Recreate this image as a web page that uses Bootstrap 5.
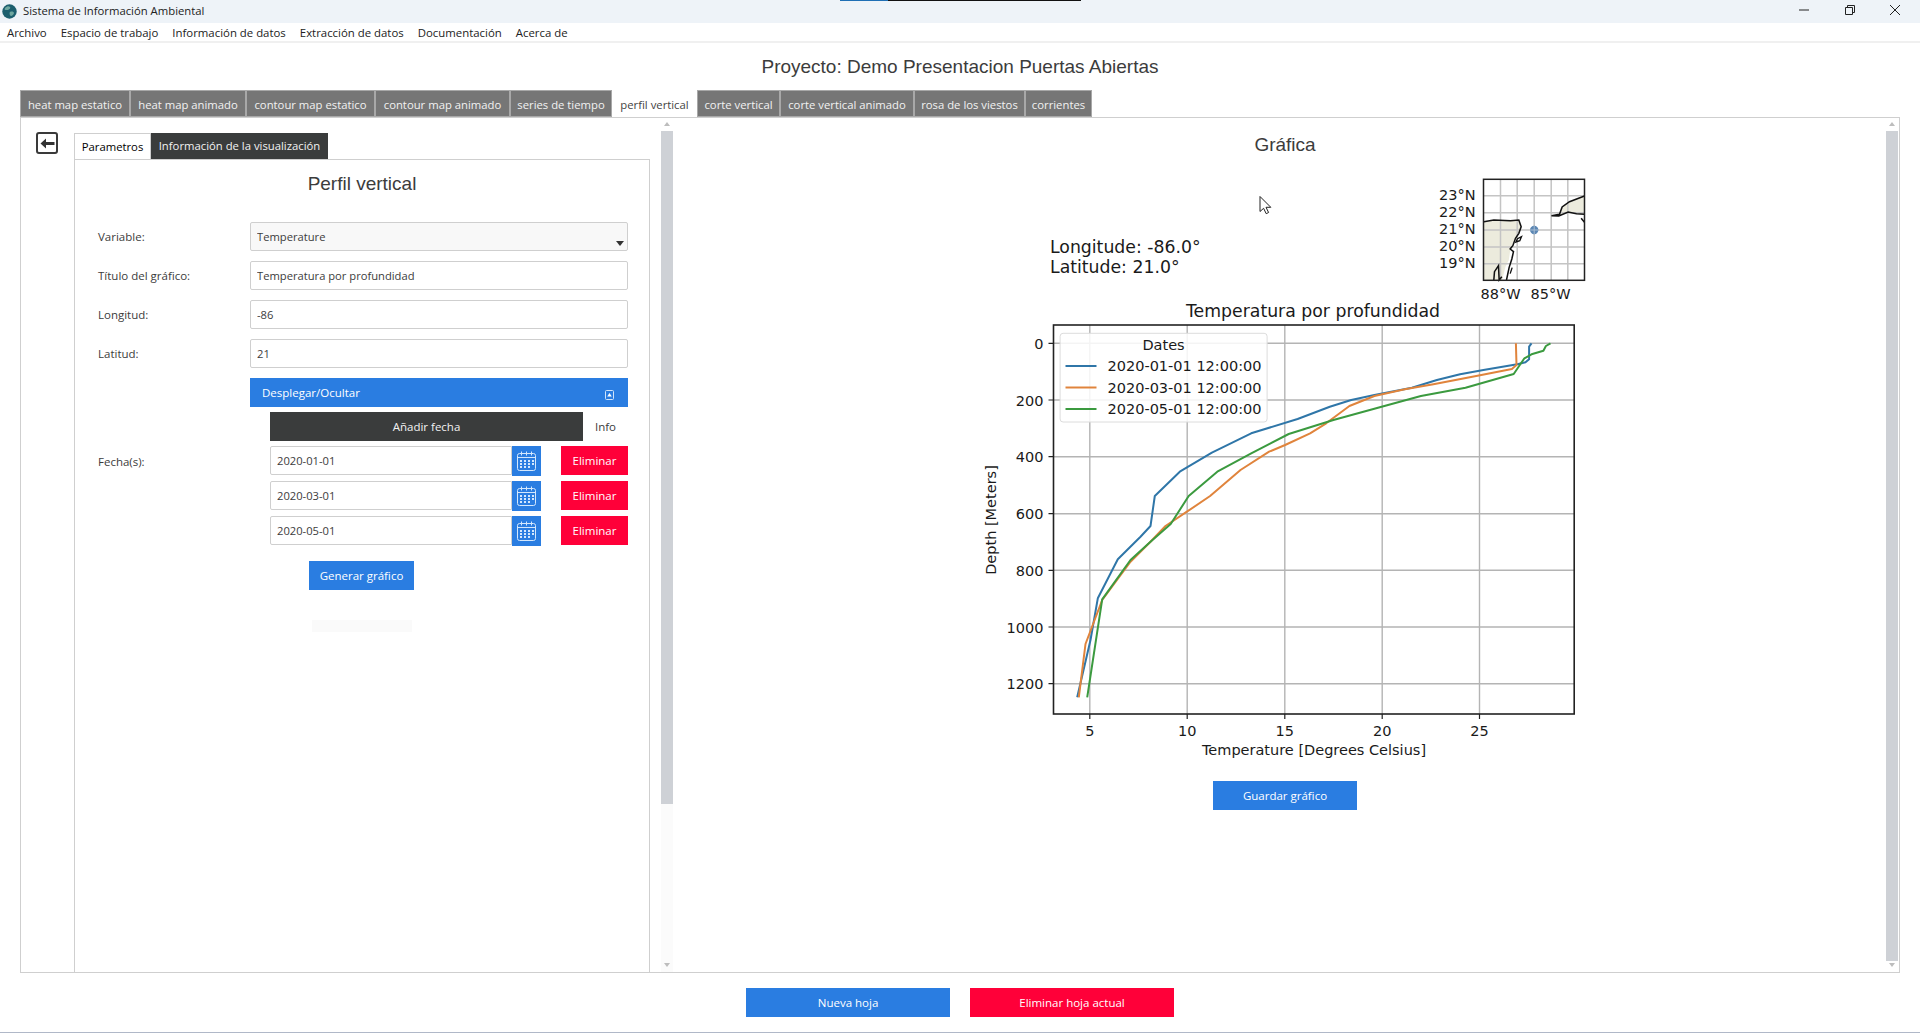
<!DOCTYPE html>
<html lang="es">
<head>
<meta charset="utf-8">
<title>Sistema de Información Ambiental</title>
<link href="https://cdn.jsdelivr.net/npm/bootstrap@5.3.0/dist/css/bootstrap.min.css" rel="stylesheet">
<style>
html,body{height:1033px;overflow:hidden;background:#fff}
body{font-family:"Open Sans","Liberation Sans",sans-serif;font-size:11.5px;color:#3c3c3c;width:1920px}
.app-shell{height:1033px;border-bottom:1px solid #b0b8c8}
.win-title{height:23px;background:#eef3f8;font-size:11.3px;color:#222;position:relative}
.win-title .app-logo{margin:0 6px 0 2px}
.win-progress{position:absolute;left:840px;top:0;width:241px;height:1px;background:linear-gradient(90deg,#1f6fb5 48px,#111 48px)}
.win-ctrls{margin-left:auto;gap:33.5px;padding-right:19px;margin-bottom:4px}
.menu-strip{height:20px;border-bottom:2px solid #f0f0f0;padding-left:7px;gap:14px;font-size:11.4px;color:#222;line-height:19px}
.proj-head{height:47px;font-family:"Liberation Sans",sans-serif;font-size:19px;color:#3c3c3c;line-height:47px;text-align:center;margin:0;padding:0;font-weight:400}
.top-tabs{margin-left:20px;height:27px;border:0;flex-wrap:nowrap}
.top-tabs .nav-link{height:27px;padding:0;border:1px solid #a8a8a8;border-radius:0;margin:0;background:#767676;color:#f2f2f2;font-size:11.3px;line-height:27px;text-align:center;white-space:nowrap}
.top-tabs .nav-link.active{background:#fff;color:#444;border-color:#fff}
.t1{width:110px}.t2{width:116px}.t3{width:129px}.t4{width:135px}.t5{width:102px}.t6{width:85px}.t7{width:83px}.t8{width:134px}.t9{width:111px}.t10{width:67px}
.work-frame{margin-left:20px;width:1880px;height:856px;border:1px solid #cfcfcf}
.left-pane{width:652px;flex:none}
.back-col{width:53px;flex:none;padding:14px 0 0 15px}
.back-btn{width:22px;height:22px;border:2px solid #3a3a3a;border-radius:3px;padding:0;background:#fff;display:flex;align-items:center;justify-content:center}
.param-col{width:576px;flex:none;padding-top:15px;display:flex;flex-direction:column}
.inner-tabs{height:26px;border:0;flex-wrap:nowrap}
.inner-tabs .nav-link{height:26px;padding:0;border:0;border-radius:0;margin:0;font-size:11.3px;line-height:26px;text-align:center;color:#444;background:#fff}
.inner-tabs .nav-link.dark-tab{background:#3a3c3c;color:#f2f2f2;width:177px}
.inner-tabs .nav-link.active{width:77px;border:1px solid #cfcfcf;border-bottom:0}
.inner-frame{flex:1;border:1px solid #cfcfcf;border-bottom:0;padding:0 21px 0 23px}
.pane-head{font-family:"Liberation Sans",sans-serif;font-size:19px;font-weight:400;color:#3c3c3c;text-align:center;line-height:24px;margin:0;padding-top:12px;height:62px;width:528px}
.form-line{height:29px;margin-bottom:10px}
.form-lab{width:152px;flex:none;margin:0;font-size:11.5px;color:#3c3c3c}
.fld{height:29px;min-height:29px;padding:0 6px;font-size:11.2px;border-radius:2px;border:1px solid #cfcfcf;color:#3c3c3c;line-height:27px;width:378px;background:#fff}
.sel-wrap{position:relative;width:378px}
.sel-wrap::after{content:"";position:absolute;right:4px;top:19px;border:4px solid transparent;border-top:5px solid #333;border-bottom:0}
.sel-wrap .fld{background:#f8f8f8;appearance:none}
.blue-act,.red-act,.dark-act{border:0;border-radius:0;padding:0;font-size:11.5px;color:#fff;height:29px}
.blue-act,.blue-act:hover{background:#2a7de1;color:#fff}
.red-act,.red-act:hover{background:#ff0039;color:#fff}
.dark-act,.dark-act:hover{background:#3a3c3c;color:#f2f2f2}
.collapse-bar{width:378px;padding:0 14px 0 12px;text-align:left}
.collapse-bar svg{margin-top:4px}
.add-line{margin:5px 0 5px 172px;height:29px}
.add-btn{width:313px}
.info-txt{width:45px;text-align:center;margin-left:0;color:#3c3c3c}
.dates-lab{width:172px;flex:none;margin:0;padding-top:7px;font-size:11.5px}
.date-line{height:29px;margin-bottom:6px}
.date-fld{width:242px;border-radius:2px 0 0 2px}
.cal-btn{width:29px;height:30px;background:#2a7de1;border:0;padding:0;border-radius:0;display:flex;align-items:center;justify-content:center;margin-right:20px}
.del-btn{width:67px}
.gen-btn{width:105px;margin:10px 0 0 211px;display:block}
.ghost-bar{width:100px;height:12px;background:#fafafa;margin:30px 0 0 214px}
.vbar{width:12px;flex:none;position:relative;background:linear-gradient(#fff 0,#fff 13px,#ced1d6 13px,#ced1d6 686px,#fbfbfb 686px)}
.bar-up,.bar-dn{position:absolute;left:3px;border:3px solid transparent}
.bar-up{top:4px;border-bottom:4px solid #bdbdbd;border-top:0}
.bar-dn{bottom:5px;border-top:4px solid #bdbdbd;border-bottom:0}
.bar-right{background:linear-gradient(#fff 0,#fff 13px,#ced1d6 13px,#ced1d6 843px,#fff 843px);margin-right:1px}
.chart-pane{flex:1;padding:15px 0 0 11px;min-width:0}
.chart-head{font-family:"Liberation Sans",sans-serif;font-size:19px;font-weight:400;color:#3c3c3c;text-align:center;line-height:24px;margin:0;height:24px}
.chart-svg{display:block;width:640px;height:600px;margin:13px auto 0}
.chart-svg text{font-family:"DejaVu Sans",sans-serif;font-size:14.5px;fill:#1a1a1a}
.chart-svg .big-txt{font-size:17.3px}
.save-btn{width:144px;display:block;margin:11px auto 0}
.foot-row{gap:20px;padding-top:15px}
.foot-btn{width:204px}
</style>
</head>
<body>
<div class="app-shell d-flex flex-column">
  <div class="win-title d-flex align-items-center">
    <span class="win-progress"></span>
    <svg class="app-logo" width="15" height="15" viewBox="0 0 15 15"><circle cx="7.5" cy="7.5" r="7.2" fill="#1c5f6e"/><path d="M3 4c2-2 4-2 5-1s-1 3-3 3-3 0-2-2zM8 8c2-1 4 0 4 1s-2 3-3 3-2-3-1-4z" fill="#6fa8a0"/></svg>
    <span>Sistema de Información Ambiental</span>
    <div class="win-ctrls d-flex align-items-center">
      <svg width="12" height="12" viewBox="0 0 12 12"><path d="M1 6h10" stroke="#222" fill="none"/></svg>
      <svg width="12" height="12" viewBox="0 0 12 12"><path d="M1.5 3.5h7v7h-7zM3.5 3.5v-2h7v7h-2" stroke="#222" fill="none"/></svg>
      <svg width="12" height="12" viewBox="0 0 12 12"><path d="M1 1l10 10M11 1L1 11" stroke="#222" fill="none"/></svg>
    </div>
  </div>
  <div class="menu-strip d-flex">
    <span>Archivo</span><span>Espacio de trabajo</span><span>Información de datos</span><span>Extracción de datos</span><span>Documentación</span><span>Acerca de</span>
  </div>
  <h1 class="proj-head">Proyecto: Demo Presentacion Puertas Abiertas</h1>
  <ul class="nav nav-tabs top-tabs">
    <li class="nav-item"><a class="nav-link t1" href="#">heat map estatico</a></li>
    <li class="nav-item"><a class="nav-link t2" href="#">heat map animado</a></li>
    <li class="nav-item"><a class="nav-link t3" href="#">contour map estatico</a></li>
    <li class="nav-item"><a class="nav-link t4" href="#">contour map animado</a></li>
    <li class="nav-item"><a class="nav-link t5" href="#">series de tiempo</a></li>
    <li class="nav-item"><a class="nav-link t6 active" href="#">perfil vertical</a></li>
    <li class="nav-item"><a class="nav-link t7" href="#">corte vertical</a></li>
    <li class="nav-item"><a class="nav-link t8" href="#">corte vertical animado</a></li>
    <li class="nav-item"><a class="nav-link t9" href="#">rosa de los viestos</a></li>
    <li class="nav-item"><a class="nav-link t10" href="#">corrientes</a></li>
  </ul>
  <div class="work-frame d-flex">
    <div class="left-pane d-flex">
      <div class="back-col">
        <button class="back-btn" type="button" aria-label="Volver"><svg width="15" height="11" viewBox="0 0 15 11"><path d="M6 .5v3.6h8.5v2.8H6v3.6L.5 5.5z" fill="#333"/></svg></button>
      </div>
      <div class="param-col">
        <ul class="nav nav-tabs inner-tabs">
          <li class="nav-item"><a class="nav-link active" href="#">Parametros</a></li>
          <li class="nav-item"><a class="nav-link dark-tab" href="#">Información de la visualización</a></li>
        </ul>
        <div class="inner-frame">
          <h2 class="pane-head">Perfil vertical</h2>
          <div class="form-line d-flex align-items-center">
            <label class="form-lab">Variable:</label>
            <div class="sel-wrap"><select class="form-control fld"><option>Temperature</option></select></div>
          </div>
          <div class="form-line d-flex align-items-center">
            <label class="form-lab">Título del gráfico:</label>
            <input class="form-control fld" value="Temperatura por profundidad">
          </div>
          <div class="form-line d-flex align-items-center">
            <label class="form-lab">Longitud:</label>
            <input class="form-control fld" value="-86">
          </div>
          <div class="form-line d-flex align-items-center">
            <label class="form-lab">Latitud:</label>
            <input class="form-control fld" value="21">
          </div>
          <div class="d-flex">
            <div class="form-lab"></div>
            <button class="btn blue-act collapse-bar d-flex align-items-center justify-content-between" type="button">
              <span>Desplegar/Ocultar</span>
              <svg width="9" height="10" viewBox="0 0 9 10"><rect x=".5" y=".5" width="8" height="9" rx="1" fill="none" stroke="#cfe3fa"/><path d="M4.5 3l2.3 3.6H2.2z" fill="#fff"/></svg>
            </button>
          </div>
          <div class="add-line d-flex align-items-center">
            <button class="btn dark-act add-btn" type="button">Añadir fecha</button>
            <span class="info-txt">Info</span>
          </div>
          <div class="d-flex">
            <div class="dates-lab">Fecha(s):</div>
            <div>
              <div class="date-line d-flex">
                <input class="form-control fld date-fld" value="2020-01-01">
                <button class="cal-btn" type="button" aria-label="Calendario"><svg width="19" height="20" viewBox="0 0 19 20"><g fill="none" stroke="#d3e7fd"><rect x=".5" y="2.5" width="18" height="17" rx="2"/><path d="M.5 6.5h18M4.5 .5v4M9.5 .5v4M14.5 .5v4"/></g><g fill="#d3e7fd"><rect x="3" y="9" width="2" height="2"/><rect x="7" y="9" width="2" height="2"/><rect x="11" y="9" width="2" height="2"/><rect x="15" y="9" width="2" height="2"/><rect x="3" y="12" width="2" height="2"/><rect x="7" y="12" width="2" height="2"/><rect x="11" y="12" width="2" height="2"/><rect x="15" y="12" width="2" height="2"/><rect x="3" y="15" width="2" height="2"/><rect x="7" y="15" width="2" height="2"/><rect x="11" y="15" width="2" height="2"/></g></svg></button>
                <button class="btn red-act del-btn" type="button">Eliminar</button>
              </div>
              <div class="date-line d-flex">
                <input class="form-control fld date-fld" value="2020-03-01">
                <button class="cal-btn" type="button" aria-label="Calendario"><svg width="19" height="20" viewBox="0 0 19 20"><g fill="none" stroke="#d3e7fd"><rect x=".5" y="2.5" width="18" height="17" rx="2"/><path d="M.5 6.5h18M4.5 .5v4M9.5 .5v4M14.5 .5v4"/></g><g fill="#d3e7fd"><rect x="3" y="9" width="2" height="2"/><rect x="7" y="9" width="2" height="2"/><rect x="11" y="9" width="2" height="2"/><rect x="15" y="9" width="2" height="2"/><rect x="3" y="12" width="2" height="2"/><rect x="7" y="12" width="2" height="2"/><rect x="11" y="12" width="2" height="2"/><rect x="15" y="12" width="2" height="2"/><rect x="3" y="15" width="2" height="2"/><rect x="7" y="15" width="2" height="2"/><rect x="11" y="15" width="2" height="2"/></g></svg></button>
                <button class="btn red-act del-btn" type="button">Eliminar</button>
              </div>
              <div class="date-line d-flex">
                <input class="form-control fld date-fld" value="2020-05-01">
                <button class="cal-btn" type="button" aria-label="Calendario"><svg width="19" height="20" viewBox="0 0 19 20"><g fill="none" stroke="#d3e7fd"><rect x=".5" y="2.5" width="18" height="17" rx="2"/><path d="M.5 6.5h18M4.5 .5v4M9.5 .5v4M14.5 .5v4"/></g><g fill="#d3e7fd"><rect x="3" y="9" width="2" height="2"/><rect x="7" y="9" width="2" height="2"/><rect x="11" y="9" width="2" height="2"/><rect x="15" y="9" width="2" height="2"/><rect x="3" y="12" width="2" height="2"/><rect x="7" y="12" width="2" height="2"/><rect x="11" y="12" width="2" height="2"/><rect x="15" y="12" width="2" height="2"/><rect x="3" y="15" width="2" height="2"/><rect x="7" y="15" width="2" height="2"/><rect x="11" y="15" width="2" height="2"/></g></svg></button>
                <button class="btn red-act del-btn" type="button">Eliminar</button>
              </div>
            </div>
          </div>
          <button class="btn blue-act gen-btn" type="button">Generar gráfico</button>
          <div class="ghost-bar"></div>
        </div>
      </div>
      <div class="ms-auto vbar"><span class="bar-up"></span><span class="bar-dn"></span></div>
    </div>
    <div class="chart-pane">
      <h2 class="chart-head">Gráfica</h2>
      <svg class="chart-svg" viewBox="964.5 170 640 600">
        <!-- locator map -->
        <g transform="translate(1430 170) scale(.3333)">
          <path d="M160 155l30-5 50 2 25-2 7 20-7 20-10 15-15 30-5 35-10 20-10 40h-55z" fill="#ecebdd" stroke="none"/>
          <path d="M462 78l-45 17-22 16-8 22-24 4 22 1 28-12 25 5 24 2v-55z" fill="#ecebdd" stroke="none"/>
        </g>
        <g fill="none" stroke="#c4c4c4" stroke-width="1.5"><path d="M1500 179v101M1516.7 179v101M1533.7 179v101M1550.7 179v101M1567.3 179v101M1483 195.7h101M1483 212.7h101M1483 230h101M1483 247h101M1483 263.7h101"/></g>
        <g transform="translate(1430 170) scale(.3333)">
          <path d="M160 155l30-5 50 2 25-2 7 20-7 20-10 15-8 22-8 10 10 8-5 22-8 25-8 38M190 330l2-25 12-18 2 43 8-10" fill="none" stroke="#111" stroke-width="4.6"/>
          <path d="M256 216l5-10 12-6-5 12zM239 311l6-18" fill="none" stroke="#111" stroke-width="4"/>
          <path d="M462 78l-45 17-22 16-8 22-24 4 22 1 28-12 25 5 24 2M452 145l10 12" fill="none" stroke="#111" stroke-width="4.6"/>
        </g>
        <circle cx="1533.7" cy="230" r="4.2" fill="#5b86b3"/>
        <path d="M1529.5 230h8.4M1533.7 225.8v8.4" stroke="#a8bdd3" stroke-width="1"/>
        <rect x="1483" y="179.3" width="101" height="101" fill="none" stroke="#222" stroke-width="1.5"/>
        <g text-anchor="end"><text x="1475" y="200">23°N</text><text x="1475" y="217">22°N</text><text x="1475" y="234">21°N</text><text x="1475" y="251">20°N</text><text x="1475" y="268">19°N</text></g>
        <g text-anchor="middle"><text x="1500" y="299">88°W</text><text x="1550" y="299">85°W</text></g>
        <text class="big-txt" x="1049.5" y="253">Longitude: -86.0°</text>
        <text class="big-txt" x="1049.5" y="272.5">Latitude: 21.0°</text>
        <text class="big-txt" x="1312.5" y="317" text-anchor="middle">Temperatura por profundidad</text>
        <!-- main axes -->
        <g fill="none" stroke="#b4b4b4" stroke-width="1.4"><path d="M1089.3 325v389M1186.7 325v389M1284.3 325v389M1381.7 325v389M1479 325v389M1053 343.3h521M1053 400h521M1053 456.7h521M1053 513.7h521M1053 570.3h521M1053 627h521M1053 683.7h521"/></g>
        <g fill="none" stroke-width="2" stroke-linejoin="round">
          <polyline stroke="#2f76a8" points="1531,343.3 1528.6,346.7 1528.6,359.3 1525,362.3 1516.8,364.3 1482.9,370 1459.6,374.3 1436.4,380 1411.4,387.7 1373.9,395 1350.7,400 1329.3,406.7 1297.1,419 1250.7,433.3 1211.4,452.7 1179.3,471.7 1154.3,496 1150,526 1140,536.7 1117.3,559.3 1097.3,598.3 1090,640 1076.7,697.3"/>
          <polyline stroke="#e0843c" points="1515.4,343.3 1516,365 1511.4,369 1475.7,376 1432.9,384.3 1404.3,389.3 1373.9,396 1348.9,406 1325.7,423.3 1309.6,433.3 1284.6,445 1268.6,451.7 1240,470 1209.6,496 1186.4,511.7 1165,526 1150,541.7 1130,561.7 1101.7,600 1085,644 1078.3,697.3"/>
          <polyline stroke="#3b9a3f" points="1550,343.3 1545.4,346 1542.9,350.7 1531,354.3 1523.9,358.3 1513.2,374 1465,387.7 1420.4,396 1379.3,407.3 1332.9,420 1288.2,434 1250.7,453.3 1216.8,471.7 1188.2,496 1170.2,524 1150,541.7 1130,560 1101.7,599.3 1086.7,697.3"/>
        </g>
        <rect x="1053" y="325" width="520.7" height="389" fill="none" stroke="#222" stroke-width="1.6"/>
        <g stroke="#222" stroke-width="1.2" fill="none"><path d="M1089.3 714v5M1186.7 714v5M1284.3 714v5M1381.7 714v5M1479 714v5M1053 343.3h-5M1053 400h-5M1053 456.7h-5M1053 513.7h-5M1053 570.3h-5M1053 627h-5M1053 683.7h-5"/></g>
        <g text-anchor="end"><text x="1043" y="349">0</text><text x="1043" y="405.5">200</text><text x="1043" y="462">400</text><text x="1043" y="519">600</text><text x="1043" y="575.5">800</text><text x="1043" y="632.5">1000</text><text x="1043" y="689">1200</text></g>
        <g text-anchor="middle"><text x="1089.3" y="736">5</text><text x="1186.7" y="736">10</text><text x="1284.3" y="736">15</text><text x="1381.7" y="736">20</text><text x="1479" y="736">25</text>
          <text x="1313.5" y="755">Temperature [Degrees Celsius]</text>
          <text transform="translate(995 520) rotate(-90)">Depth [Meters]</text></g>
        <!-- legend -->
        <rect x="1059.6" y="333.3" width="207" height="88.7" rx="3" fill="#fff" fill-opacity=".85" stroke="#dcdcdc"/>
        <text x="1163" y="350" text-anchor="middle">Dates</text>
        <path d="M1065 366h31" stroke="#2f76a8" stroke-width="2"/><text x="1107" y="371">2020-01-01 12:00:00</text>
        <path d="M1065 387.5h31" stroke="#e0843c" stroke-width="2"/><text x="1107" y="392.5">2020-03-01 12:00:00</text>
        <path d="M1065 409h31" stroke="#3b9a3f" stroke-width="2"/><text x="1107" y="414">2020-05-01 12:00:00</text>
        <!-- mouse pointer -->
        <path d="M1259.5 196.5v15l3.6-3.2 2.6 5.4 2.4-1.2-2.6-5.2h4.8z" fill="#fff" stroke="#222"/>
      </svg>
      <button class="btn blue-act save-btn" type="button">Guardar gráfico</button>
    </div>
    <div class="vbar bar-right"><span class="bar-up"></span><span class="bar-dn"></span></div>
  </div>
  <div class="foot-row d-flex justify-content-center">
    <button class="btn blue-act foot-btn" type="button">Nueva hoja</button>
    <button class="btn red-act foot-btn" type="button">Eliminar hoja actual</button>
  </div>
</div>
</body>
</html>
